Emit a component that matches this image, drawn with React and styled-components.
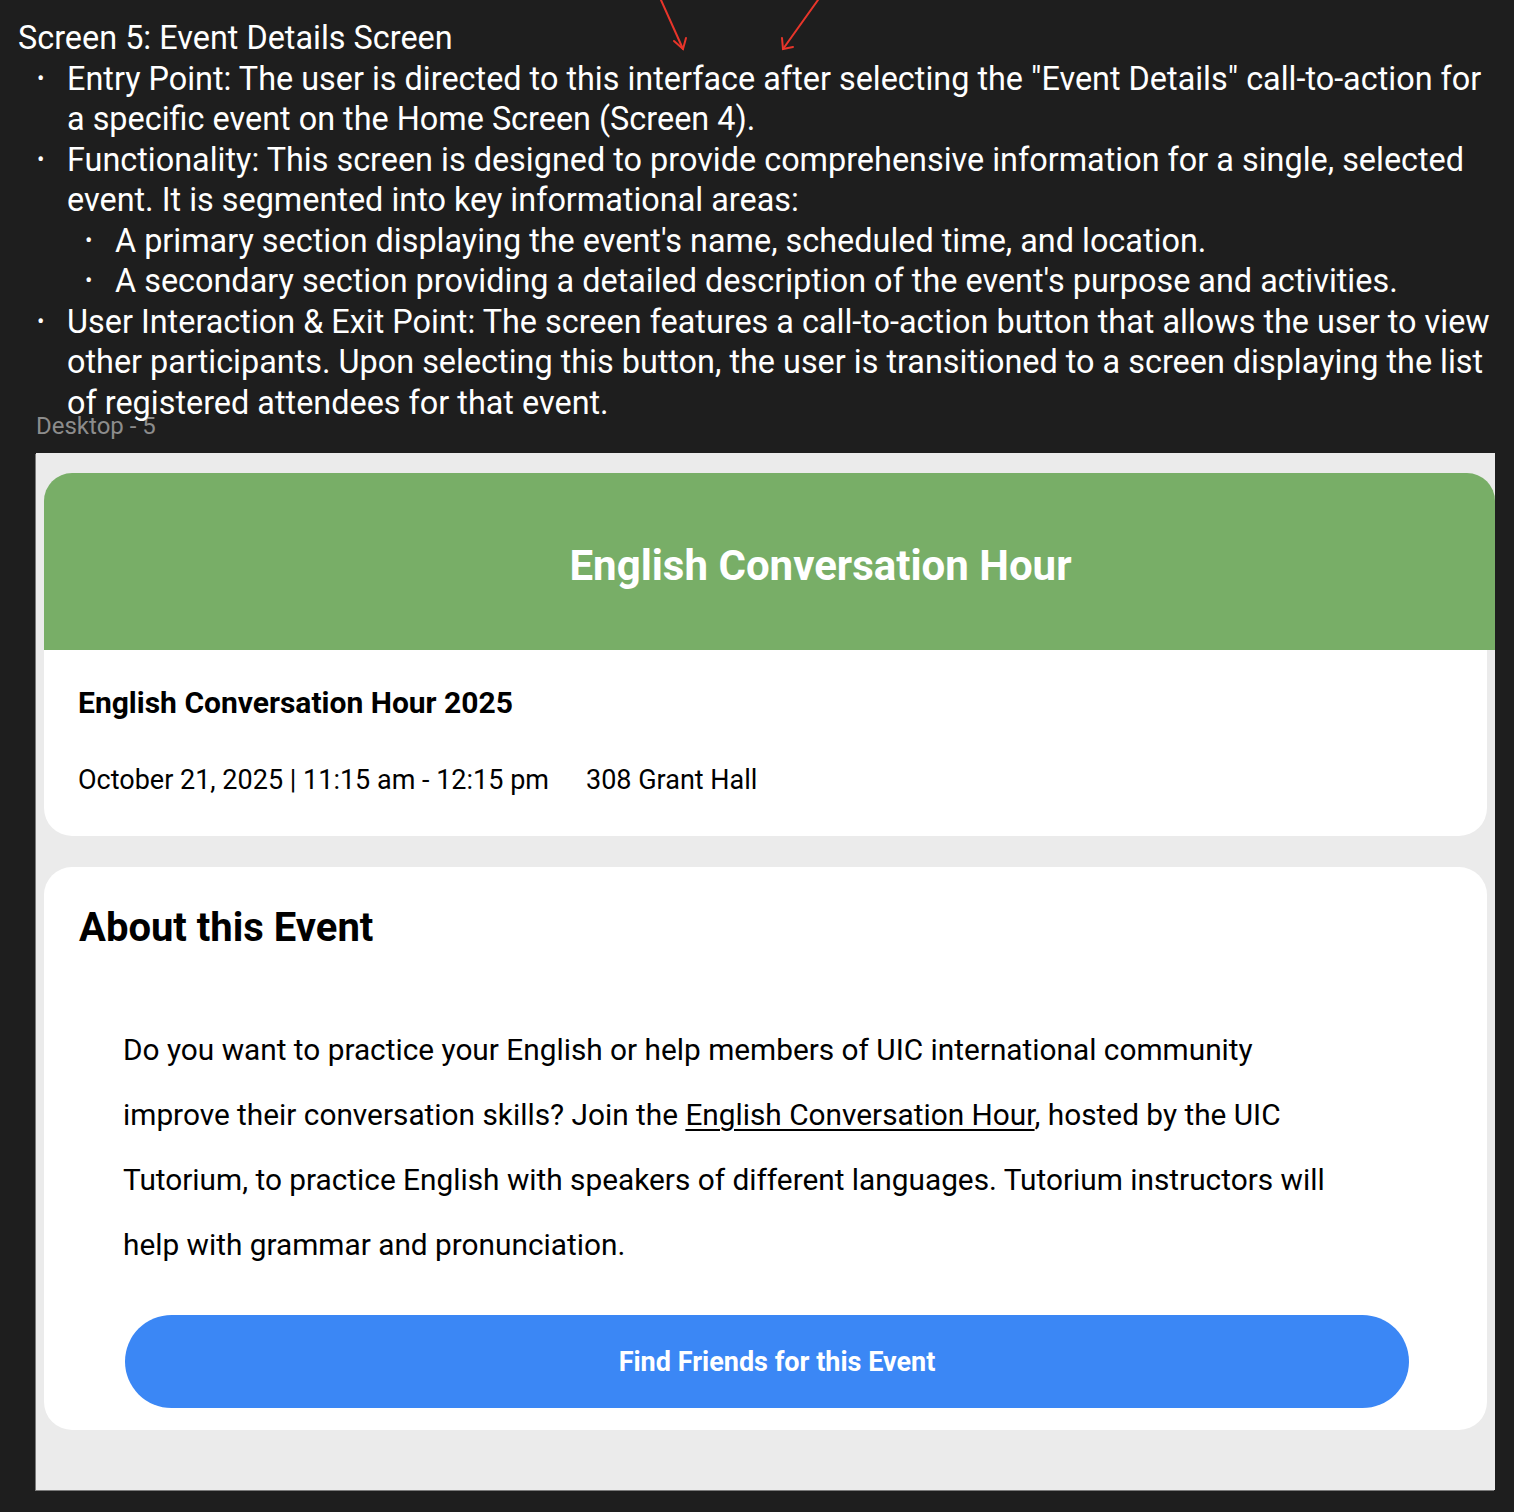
import React from "react";
import styled, { createGlobalStyle } from "styled-components";

const Global = createGlobalStyle`
  html, body {
    margin: 0;
    padding: 0;
    background: #1e1e1e;
    font-family: Roboto, "Noto Sans", Arial, sans-serif;
  }
`;

const Canvas = styled.div`
  position: relative;
  width: 1514px;
  height: 1512px;
  background: #1e1e1e;
  overflow: hidden;
`;

const Arrows = styled.svg`
  position: absolute;
  left: 0;
  top: 0;
  pointer-events: none;
`;

const Notes = styled.div`
  height: 412px;
  padding: 18px 18px 0 18px;
  color: #ffffff;
  font-size: 32.4px;
  line-height: 40.5px;
  box-sizing: border-box;
`;

const NoteTitle = styled.div``;

const List = styled.ul`
  margin: 0;
  padding: 0 0 0 ${(p) => (p.$nested ? 48 : 49)}px;
  list-style: none;
`;

const Item = styled.li`
  position: relative;
  &::before {
    content: "•";
    position: absolute;
    left: -30px;
    font-size: 22px;
  }
`;

const FrameLabel = styled.div`
  margin: 0 0 0 36px;
  height: 41px;
  color: #8c8c8c;
  font-size: 24px;
  line-height: 28px;
`;

const Frame = styled.div`
  margin-left: 36px;
  width: 1459px;
  height: 1037px;
  background: #ebebeb;
  box-shadow: -1px 1px 0 #7a7a7a;
  overflow: hidden;
  padding: 20px 0 0 8px;
  box-sizing: border-box;
  display: flex;
  flex-direction: column;
`;

const Banner = styled.div`
  width: 1451px;
  height: 177px;
  background: #78ae67;
  border-radius: 28px 28px 0 0;
  display: flex;
  align-items: center;
  justify-content: center;
  padding: 7px 0 0 102px;
  box-sizing: border-box;
  color: #ffffff;
  font-size: 42px;
  font-weight: 700;
`;

const Card = styled.div`
  width: 1443px;
  background: #ffffff;
  border-radius: ${(p) => (p.$flatTop ? "0 0 28px 28px" : "28px")};
  box-sizing: border-box;
`;

const InfoCard = styled(Card)`
  height: 186px;
  padding: 36px 34px 0;
`;

const EventName = styled.div`
  font-size: 30px;
  font-weight: 700;
  color: #000;
  line-height: 34px;
`;

const MetaRow = styled.div`
  margin-top: 43px;
  display: flex;
  gap: 37px;
  font-size: 27px;
  color: #000;
  line-height: 34px;
`;

const AboutCard = styled(Card)`
  margin-top: 31px;
  height: 563px;
  padding: 36px 35px 0;
`;

const AboutTitle = styled.h2`
  margin: 0;
  font-size: 40px;
  font-weight: 700;
  line-height: 50px;
  color: #000;
`;

const Body = styled.p`
  margin: 64px 0 0 44px;
  width: 1300px;
  font-size: 29.8px;
  line-height: 65px;
  color: #000;
`;

const Link = styled.a`
  color: inherit;
  text-decoration: underline;
  text-underline-offset: 4px;
  text-decoration-thickness: 2px;
`;

const FriendsButton = styled.button`
  display: block;
  margin: 38px 0 0 46px;
  width: 1284px;
  height: 93px;
  border: 0;
  border-radius: 47px;
  background: #3b87f5;
  color: #ffffff;
  font-family: Roboto, "Noto Sans", Arial, sans-serif;
  font-size: 27px;
  font-weight: 700;
  padding-left: 26px;
  cursor: pointer;
`;

export default function App() {
  return (
    <>
      <Global />
      <Canvas>
        <Notes>
          <NoteTitle>Screen 5: Event Details Screen</NoteTitle>
          <List>
            <Item>
              Entry Point: The user is directed to this interface after selecting the "Event Details" call-to-action for
              a specific event on the Home Screen (Screen 4).
            </Item>
            <Item>
              Functionality: This screen is designed to provide comprehensive information for a single, selected
              event. It is segmented into key informational areas:
              <List $nested>
                <Item>A primary section displaying the event's name, scheduled time, and location.</Item>
                <Item>A secondary section providing a detailed description of the event's purpose and activities.</Item>
              </List>
            </Item>
            <Item>
              User Interaction &amp; Exit Point: The screen features a call-to-action button that allows the user to view
              other participants. Upon selecting this button, the user is transitioned to a screen displaying the list
              of registered attendees for that event.
            </Item>
          </List>
        </Notes>
        <FrameLabel>Desktop - 5</FrameLabel>
        <Frame>
          <Banner>English Conversation Hour</Banner>
          <InfoCard $flatTop>
            <EventName>English Conversation Hour 2025</EventName>
            <MetaRow>
              <span>October 21, 2025 | 11:15 am - 12:15 pm</span>
              <span>308 Grant Hall</span>
            </MetaRow>
          </InfoCard>
          <AboutCard>
            <AboutTitle>About this Event</AboutTitle>
            <Body>
              Do you want to practice your English or help members of UIC international community
              <br />
              improve their conversation skills? Join the <Link href="#">English Conversation Hour</Link>, hosted by
              the UIC
              <br />
              Tutorium, to practice English with speakers of different languages. Tutorium instructors will
              <br />
              help with grammar and pronunciation.
            </Body>
            <FriendsButton>Find Friends for this Event</FriendsButton>
          </AboutCard>
        </Frame>
        <Arrows width="1514" height="60" viewBox="0 0 1514 60">
          <g stroke="#e8352a" strokeWidth="2" fill="none" strokeLinecap="round">
            <path d="M661 0 L683 49" />
            <path d="M674 41 L683 49 L686 38" />
            <path d="M818 0 L783 49" />
            <path d="M782 38 L783 49 L793 47" />
          </g>
        </Arrows>
      </Canvas>
    </>
  );
}
